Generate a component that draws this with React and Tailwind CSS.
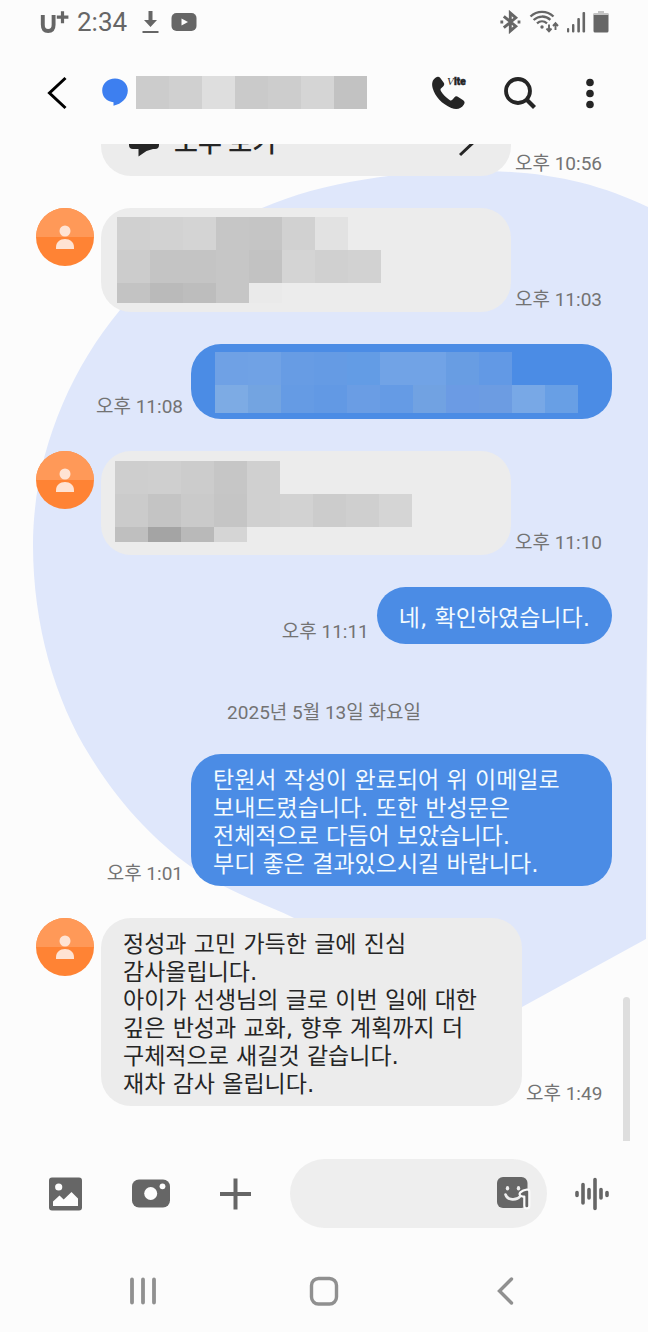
import { useState } from "react"

const headerTiles = [
  "bg-[#cccccc]",
  "bg-[#d0d0d0]",
  "bg-[#dedede]",
  "bg-[#cacaca]",
  "bg-[#cdcdcd]",
  "bg-[#d5d5d5]",
  "bg-[#c2c2c2]",
]

const firstTiles = [
  {
    height: "h-[33px]",
    tiles: ["bg-[#d0d0d0]", "bg-[#d2d2d2]", "bg-[#d4d4d4]", "bg-[#c6c6c6]", "bg-[#c5c5c5]", "bg-[#d1d1d1]", "bg-[#e2e2e2]"],
  },
  {
    height: "h-[33px]",
    tiles: ["bg-[#cccccc]", "bg-[#c4c4c4]", "bg-[#c4c4c4]", "bg-[#c6c6c6]", "bg-[#c2c2c2]", "bg-[#d4d4d4]", "bg-[#d0d0d0]", "bg-[#d2d2d2]"],
  },
  {
    height: "h-[20px]",
    tiles: ["bg-[#c3c3c3]", "bg-[#bababa]", "bg-[#bdbdbd]", "bg-[#c6c6c6]", "bg-[#eaeaea]"],
  },
]

const secondTiles = [
  {
    height: "h-[33px]",
    tiles: [
      "bg-[#6fa1e5]",
      "bg-[#70a2e5]",
      "bg-[#679ce4]",
      "bg-[#659be4]",
      "bg-[#639ce5]",
      "bg-[#71a3e6]",
      "bg-[#71a3e6]",
      "bg-[#689de3]",
      "bg-[#6299e5]",
    ],
  },
  {
    height: "h-[28px]",
    tiles: [
      "bg-[#7dabe4]",
      "bg-[#73a4e1]",
      "bg-[#659be4]",
      "bg-[#6299e4]",
      "bg-[#6a9de4]",
      "bg-[#659be5]",
      "bg-[#71a2e2]",
      "bg-[#6b9be4]",
      "bg-[#6c9ce2]",
      "bg-[#78a8e6]",
      "bg-[#689fe5]",
    ],
  },
]

const thirdTiles = [
  {
    height: "h-[33px]",
    tiles: ["bg-[#cecece]", "bg-[#cfcfcf]", "bg-[#cccccc]", "bg-[#c6c6c6]", "bg-[#d0d0d0]"],
  },
  {
    height: "h-[33px]",
    tiles: [
      "bg-[#cbcbcb]",
      "bg-[#c4c4c4]",
      "bg-[#cacaca]",
      "bg-[#c5c5c5]",
      "bg-[#d0d0d0]",
      "bg-[#d2d2d2]",
      "bg-[#cccccc]",
      "bg-[#cfcfcf]",
      "bg-[#d5d5d5]",
    ],
  },
  {
    height: "h-[15px]",
    tiles: ["bg-[#bfbfbf]", "bg-[#a4a4a4]", "bg-[#b9b9b9]", "bg-[#d5d5d5]"],
  },
]

function Mosaic({ rows }) {
  return (
    <div aria-hidden="true">
      {rows.map((row, i) => (
        <div key={i} className="flex">
          {row.tiles.map((tile, j) => (
            <span key={j} className={`w-[33px] ${row.height} ${tile}`} />
          ))}
        </div>
      ))}
    </div>
  )
}

function StatusBar() {
  return (
    <div className="flex h-11 items-center pl-[40px] pr-[39px] text-[#666666]">
      <svg width="29" height="24" viewBox="0 0 29 24" fill="none" stroke="currentColor">
        <path d="M2.800 5v9.700c0 4.200 2 6.300 5.300 6.300s5.500-2.100 5.500-6.300V5" strokeWidth="3.900" />
        <path d="M22.500 1.300v12M16.800 7.200h11.600" strokeWidth="3.200" />
      </svg>
      <span className="ml-2 text-[26px] leading-8">2:34</span>
      <svg className="ml-[15px]" width="17" height="24" viewBox="0 0 17 24" fill="currentColor">
        <path d="M6.500 1h4v9h4.500L8.500 17 2 10h4.500zM.5 21h16v2H.5z" />
      </svg>
      <svg className="ml-3" width="26" height="20" viewBox="0 0 26 20">
        <rect x="0.500" y="1" width="25" height="18" rx="5" fill="currentColor" />
        <path d="M10.500 6.500v7l6.500-3.500z" fill="#fcfcfc" />
      </svg>

      <div className="ml-auto flex items-center">
        <svg width="21" height="24" viewBox="0 0 21 24" fill="none" stroke="currentColor">
          <path d="M3.800 6.300l12 9.900-5.500 4.800V3l5.500 4.800-12 9.900" strokeWidth="2.900" />
          <path d="M.4 12h2.800M17.600 12h2.800" strokeWidth="3" />
        </svg>
        <svg className="ml-2" width="30" height="24" viewBox="0 0 30 24" fill="none" stroke="currentColor">
          <path d="M1.500 6.500c6.500-6.300 16.500-6.300 23 0M4.600 10c5-4.600 12-4.600 16.800-.2M8 13.300c3-2.600 7-2.600 10 0" strokeWidth="2.300" />
          <circle cx="13" cy="17" r="1.700" fill="currentColor" stroke="none" />
          <path d="M20 14.500v6.500M17.500 18.500L20 21.300l2.500-2.800M26.500 20v-6.500M24 16l2.500-2.800L29 16" strokeWidth="1.900" />
        </svg>
        <svg className="ml-[7px]" width="20" height="24" viewBox="0 0 20 24" fill="currentColor">
          <rect x="1" y="18" width="2.200" height="4.500" rx="1" />
          <rect x="6" y="14" width="2.400" height="8.500" rx="1" />
          <rect x="11.300" y="8" width="2.600" height="14.500" rx="1" />
          <rect x="16.500" y="2" width="2.600" height="20.500" rx="1" />
        </svg>
        <svg className="ml-[7px]" width="16" height="24" viewBox="0 0 16 24">
          <rect x="5" y="1" width="6" height="4" fill="#c4c4c4" />
          <rect x="0.500" y="3.500" width="15" height="19" rx="1.500" fill="currentColor" />
          <rect x="0.500" y="3" width="15" height="2" fill="#c4c4c4" />
        </svg>
      </div>
    </div>
  )
}

function Header() {
  return (
    <header className="flex h-[100px] items-center pb-[2px] pl-[45px] pr-[42px] text-[#252525]">
      <button aria-label="뒤로">
        <svg width="24" height="34" viewBox="0 0 24 34" fill="none" stroke="#000000" strokeWidth="3">
          <path d="M20.500 2L4.500 17l16 15" />
        </svg>
      </button>
      <div className="ml-[33px] flex items-center gap-2 pb-[2px]">
        <svg className="shrink-0" width="26" height="28" viewBox="0 0 26 28">
          <path d="M13 .5C20.500.5 25.800 5.800 25.800 12.500c0 7.500-6 13.500-14.300 15.200v-3.500C4.800 23.700.2 19 .2 12.500.2 5.800 5.500.5 13 .5z" fill="#3d7ff0" />
        </svg>
        <div className="flex" aria-hidden="true">
          {headerTiles.map((tile, i) => (
            <span key={i} className={`h-[33px] w-[33px] ${tile}`} />
          ))}
        </div>
      </div>

      <div className="ml-auto flex items-center">
        <button aria-label="통화">
          <svg className="overflow-visible" width="36" height="34" viewBox="0 0 36 34">
            <path
              d="M3.500 1.700C5.500.2 7 .4 8.300 2l3.300 4.600c1 1.500.8 2.800-.5 4l-1.900 1.700c-.9.800-.9 1.700-.2 2.900 2.200 3.500 5 6.300 8.600 8.700 1.200.8 2.200.7 3-.3l1.700-2.200c1.100-1.300 2.500-1.500 3.900-.5l5 3.400c1.600 1.100 1.800 2.500.7 4.200-2.600 4.300-7.300 5.600-12.600 3.400C9.900 28 3 20.300.7 12.200-.5 7.600.2 4 3.500 1.700z"
              fill="currentColor"
            />
            <text x="15" y="9" fontSize="11" fontStyle="italic" fontFamily="Liberation Serif, serif" fill="currentColor">
              V
            </text>
            <text x="22" y="9" fontSize="10" fontWeight="900" fontFamily="Roboto, sans-serif" fill="currentColor" stroke="currentColor" strokeWidth="0.500">
              lte
            </text>
          </svg>
        </button>
        <button className="ml-[36px]" aria-label="검색">
          <svg width="32" height="34" viewBox="0 0 32 34" fill="none" stroke="currentColor">
            <circle cx="14" cy="15" r="12" strokeWidth="3.800" />
            <path d="M22.500 23.500l8 8" strokeWidth="4.200" />
          </svg>
        </button>
        <button className="ml-[38px]" aria-label="더보기">
          <svg width="32" height="34" viewBox="0 0 32 34" fill="currentColor">
            <circle cx="16" cy="6.500" r="3.800" />
            <circle cx="16" cy="17.500" r="3.800" />
            <circle cx="16" cy="28.500" r="3.800" />
          </svg>
        </button>
      </div>
    </header>
  )
}

function Avatar() {
  return (
    <svg className="shrink-0 self-start" width="58" height="58" viewBox="0 0 58 58">
      <circle cx="29" cy="29" r="29" fill="#ff8334" />
      <path d="M0 29a29 29 0 0 1 58 0z" fill="#ff9958" />
      <circle cx="29" cy="23" r="5.500" fill="#ffe3d3" />
      <path d="M20 41v-1.500c0-5.500 4-8.500 9-8.500s9 3 9 8.500V41z" fill="#ffe3d3" />
    </svg>
  )
}

function Time({ children }) {
  return <time className="shrink-0 text-[19px] leading-6 text-[#737373]">{children}</time>
}

function Received({ time, className, children }) {
  return (
    <div className="flex items-end">
      <Avatar />
      <div className={`ml-[7px] mr-1 rounded-[30px] bg-[#ececec] text-[#252525] ${className}`}>{children}</div>
      <Time>{time}</Time>
    </div>
  )
}

function Sent({ time, className, children }) {
  return (
    <div className="flex items-end justify-end gap-2">
      <Time>{time}</Time>
      <div className={`rounded-[30px] bg-[#4b8ce5] text-[#f3fbff] ${className}`}>{children}</div>
    </div>
  )
}

function MessageText({ children }) {
  return <p className="font-['DejaVu_Sans','Noto_Sans_CJK_KR',sans-serif] text-[23px] leading-7">{children}</p>
}

function Messages() {
  return (
    <main className="relative overflow-hidden">
      <svg className="absolute inset-0 h-full w-full" viewBox="0 0 648 997" preserveAspectRatio="none" aria-hidden="true">
        <path
          d="M648 63C598 39 545 27 480 27C400 27 325 37 262 64C205 89 155 124 120 166C66 231 33 316 33 401C33 481 55 556 90 612C122 664 157 698 190 722C224 746 260 758 294 774L420 919L522 863L646 795V600L648 400Z"
          fill="#dfe7fb"
        />
      </svg>

      <div className="relative flex flex-col gap-8 px-[36px] pb-[35px]">
        <div className="flex h-8 items-end">
          <div className="ml-[65px] mr-1 flex h-[66px] w-[410px] shrink-0 items-end rounded-[30px] bg-[#ececec] px-[28px] pb-[19px] text-[#252525]">
            <svg width="30" height="30" viewBox="0 0 30 30" fill="currentColor">
              <path d="M4 0h22a4 4 0 0 1 4 4v14a4 4 0 0 1-4 4h-2l-6.500 2L9.500 29.500V22H4a4 4 0 0 1-4-4V4a4 4 0 0 1 4-4z" />
            </svg>
            <span className="ml-[15px] text-[26px] font-medium leading-7">모두 보기</span>
            <svg className="ml-auto mr-[6px]" width="18" height="34" viewBox="0 0 18 34" fill="none" stroke="currentColor" strokeWidth="3">
              <path d="M1 2l16 15L1 32" />
            </svg>
          </div>
          <Time>오후 10:56</Time>
        </div>

        <Received time="오후 11:03" className="h-[104px] w-[410px] pl-[16px] pt-[9px]">
          <Mosaic rows={firstTiles} />
        </Received>

        <Sent time="오후 11:08" className="h-[75px] w-[421px] pl-[24px] pt-[8px]">
          <Mosaic rows={secondTiles} />
        </Sent>

        <Received time="오후 11:10" className="h-[104px] w-[410px] pl-[14px] pt-[10px]">
          <Mosaic rows={thirdTiles} />
        </Received>

        <Sent time="오후 11:11" className="px-[22px] pb-[12px] pt-[17px]">
          <MessageText>네, 확인하였습니다.</MessageText>
        </Sent>

        <p className="pt-7 text-center text-[19px] leading-[18px] text-[#737373]">2025년 5월 13일 화요일</p>

        <Sent time="오후 1:01" className="w-[421px] px-[22px] pb-[8px] pt-[12px]">
          <MessageText>
            탄원서 작성이 완료되어 위 이메일로
            <br />
            보내드렸습니다. 또한 반성문은
            <br />
            전체적으로 다듬어 보았습니다.
            <br />
            부디 좋은 결과있으시길 바랍니다.
          </MessageText>
        </Sent>

        <Received time="오후 1:49" className="w-[421px] px-[22px] pb-[8px] pt-[12px]">
          <MessageText>
            정성과 고민 가득한 글에 진심
            <br />
            감사올립니다.
            <br />
            아이가 선생님의 글로 이번 일에 대한
            <br />
            깊은 반성과 교화, 향후 계획까지 더
            <br />
            구체적으로 새길것 같습니다.
            <br />
            재차 감사 올립니다.
          </MessageText>
        </Received>
      </div>

      {/* scroll thumb */}
      <div className="absolute bottom-0 right-[18px] h-[144px] w-[7px] rounded-t-full bg-[#dedede]" />
    </main>
  )
}

function Composer() {
  const [message, setMessage] = useState("")

  return (
    <form
      className="flex items-center pl-[49px] pr-[39px] pt-[18px] text-[#666666]"
      onSubmit={(e) => e.preventDefault()}
    >
      <button type="button" aria-label="갤러리">
        <svg width="33" height="34" viewBox="0 0 33 34">
          <rect y="0.500" width="33" height="33" rx="3" fill="currentColor" />
          <circle cx="9.700" cy="10" r="3.600" fill="#fcfcfc" />
          <path d="M4 29v-4.500l6.500-6 4.200 4L22.500 15l6.500 6.500V29z" fill="#fcfcfc" />
        </svg>
      </button>
      <button type="button" className="ml-[50px]" aria-label="카메라">
        <svg width="38" height="34" viewBox="0 0 38 34">
          <rect y="2.500" width="38" height="28" rx="7" fill="currentColor" />
          <circle cx="18.700" cy="16.500" r="6.500" fill="#fcfcfc" />
          <circle cx="30.500" cy="9.300" r="2.900" fill="#fcfcfc" />
        </svg>
      </button>
      <button type="button" className="ml-[50px]" aria-label="첨부">
        <svg width="31" height="32" viewBox="0 0 31 32" stroke="currentColor" strokeWidth="4">
          <path d="M15.500 .5v31M0 16h31" />
        </svg>
      </button>
      <div className="relative ml-[39px] min-w-0 flex-1">
        <input
          type="text"
          aria-label="메시지 입력"
          value={message}
          onChange={(e) => setMessage(e.target.value)}
          className="block h-[69px] w-full rounded-full bg-[#eeeeee] pl-6 pr-16 text-[23px] text-[#252525] outline-none"
        />
        <button type="button" className="absolute right-[14px] top-[18px]" aria-label="이모티콘">
          <svg width="36" height="34" viewBox="0 0 36 34" fill="none">
            <rect x="0" y="0" width="30.500" height="31" rx="6" fill="currentColor" />
            <ellipse cx="10.500" cy="11.200" rx="1.700" ry="2.200" fill="#eeeeee" />
            <ellipse cx="21.500" cy="11.200" rx="1.700" ry="2.200" fill="#eeeeee" />
            <path d="M8.500 17.500c2 6 11 6.500 15 1.500" stroke="#eeeeee" strokeWidth="2.600" strokeLinecap="round" />
            <path d="M23 18c-1.500-1.500 1-4.500 7-5.500 1.400 0 2.300.8 2.300 2V29c0 3.200-5 3.200-5 0v-9.500c-1.500.3-3.300 0-4.300-1.500z" fill="currentColor" stroke="#fcfcfc" strokeWidth="2.200" strokeLinejoin="round" />
          </svg>
        </button>
      </div>
      <button type="button" className="ml-[28px]" aria-label="음성 메시지">
        <svg width="34" height="34" viewBox="0 0 34 34" stroke="currentColor" strokeWidth="3.600" strokeLinecap="round">
          <path d="M2 15.500v3M8 7.500v18.500M14 12.500v8.500M20 2.500v29M26 12.500v8.500M32 15.500v3" />
        </svg>
      </button>
    </form>
  )
}

function SystemNav() {
  return (
    <nav className="mt-[22px] grid h-[82px] grid-cols-3 place-items-center px-[52px] text-[#909090]">
      <button aria-label="최근 앱">
        <svg width="28" height="30" viewBox="0 0 28 30" stroke="currentColor" strokeWidth="3.800" strokeLinecap="round">
          <path d="M3 3.500v23M14 3.500v23M25 3.500v23" />
        </svg>
      </button>
      <button aria-label="홈">
        <svg width="30" height="30" viewBox="0 0 30 30" fill="none" stroke="currentColor" strokeWidth="3.400">
          <rect x="2.500" y="2.500" width="25" height="25.500" rx="7" />
        </svg>
      </button>
      <button aria-label="뒤로 가기">
        <svg width="18" height="30" viewBox="0 0 18 30" fill="none" stroke="currentColor" strokeWidth="3.400" strokeLinecap="round">
          <path d="M15.500 3L3.500 15l12 12" />
        </svg>
      </button>
    </nav>
  )
}

export default function App() {
  return (
    <div className="min-h-screen bg-[#fcfcfc] font-['Roboto','Noto_Sans_CJK_KR',sans-serif]">
      <StatusBar />
      <Header />
      <Messages />
      <Composer />
      <SystemNav />
    </div>
  )
}
